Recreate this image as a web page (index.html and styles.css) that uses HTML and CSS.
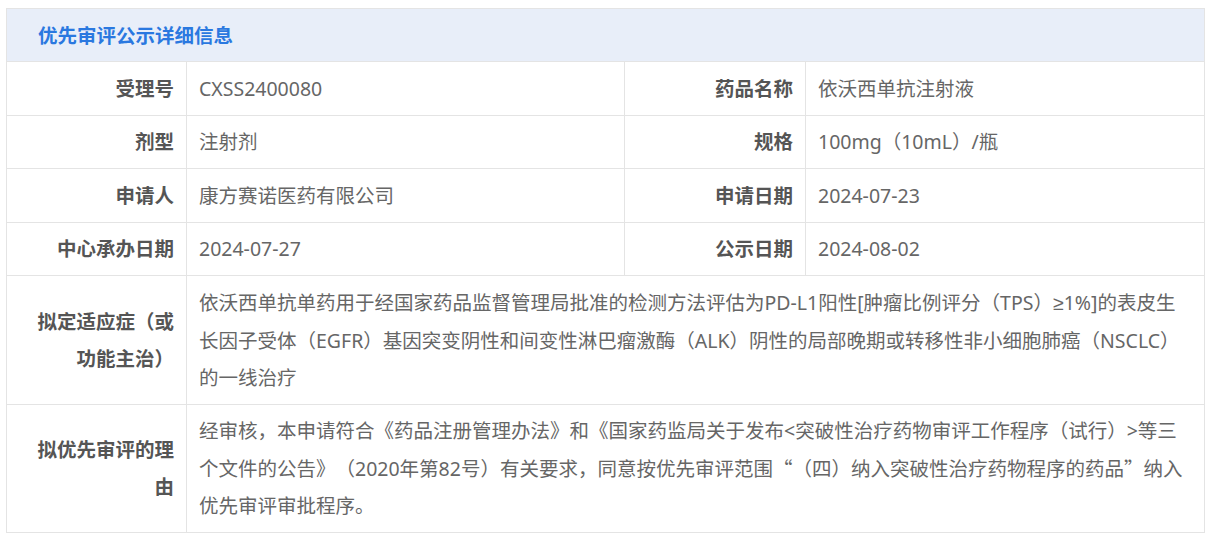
FILE: index.html
```html
<!DOCTYPE html>
<html lang="zh-CN">

<head>
  <meta charset="UTF-8">
  <meta name="viewport" content="width=device-width, initial-scale=1.0">
  <title>优先审评公示详细信息</title>
  <link rel="stylesheet" href="styles.css">
</head>

<body>
  <table class="detail">
    <colgroup>
      <col class="col-label">
      <col class="col-value">
      <col class="col-label2">
      <col>
    </colgroup>
    <thead>
      <tr>
        <th class="caption" colspan="4">优先审评公示详细信息</th>
      </tr>
    </thead>
    <tbody>
      <tr>
        <th>受理号</th>
        <td>CXSS2400080</td>
        <th>药品名称</th>
        <td>依沃西单抗注射液</td>
      </tr>
      <tr>
        <th>剂型</th>
        <td>注射剂</td>
        <th>规格</th>
        <td>100mg（10mL）/瓶</td>
      </tr>
      <tr>
        <th>申请人</th>
        <td>康方赛诺医药有限公司</td>
        <th>申请日期</th>
        <td>2024-07-23</td>
      </tr>
      <tr>
        <th>中心承办日期</th>
        <td>2024-07-27</td>
        <th>公示日期</th>
        <td>2024-08-02</td>
      </tr>
      <tr>
        <th>拟定适应症（或功能主治）</th>
        <td colspan="3">依沃西单抗单药用于经国家药品监督管理局批准的检测方法评估为PD-L1阳性[肿瘤比例评分（TPS）<span class="math">≥</span>1%]的表皮生长因子受体（EGFR）基因突变阴性和间变性淋巴瘤激酶（ALK）阴性的局部晚期或转移性非小细胞肺癌（NSCLC）的一线治疗</td>
      </tr>
      <tr>
        <th>拟优先审评的理由</th>
        <td colspan="3">经审核，本申请符合《药品注册管理办法》和《国家药监局关于发布&lt;突破性治疗药物审评工作程序（试行）&gt;等三个文件的公告》（2020年第82号）有关要求，同意按优先审评范围<span class="cjk">“（四）</span>纳入突破性治疗药物程序的药品<span class="cjk">”</span>纳入优先审评审批程序。</td>
      </tr>
    </tbody>
  </table>
</body>

</html>
```

FILE: styles.css
```css
body {
  margin: 0;
  padding: 8px 10px 0 6px;
  background: #fff;
  font-family: "Noto Sans", "Noto Sans CJK SC", sans-serif;
}

.detail {
  width: 1199px;
  border-collapse: collapse;
  table-layout: fixed;
  font-size: 19.5px;
  line-height: 37px;
  text-spacing-trim: space-all;
}

.col-label {
  width: 180px;
}

.col-value {
  width: 438px;
}

.col-label2 {
  width: 181px;
}

.detail th,
.detail td {
  border: 1px solid #e4e4e4;
  padding: 7.75px 12px;
}

.detail th {
  text-align: right;
  vertical-align: middle;
  color: #555;
  font-weight: bold;
}

.detail td {
  color: #666;
  vertical-align: middle;
}

.detail .caption {
  text-align: left;
  background: #e8eef9;
  color: #2a78e0;
  padding: 7.5px 31px;
}

/* 全角引号 */
.cjk {
  font-family: "Noto Sans CJK SC", sans-serif;
}

.math {
  font-family: "Liberation Sans", sans-serif;
}
```
